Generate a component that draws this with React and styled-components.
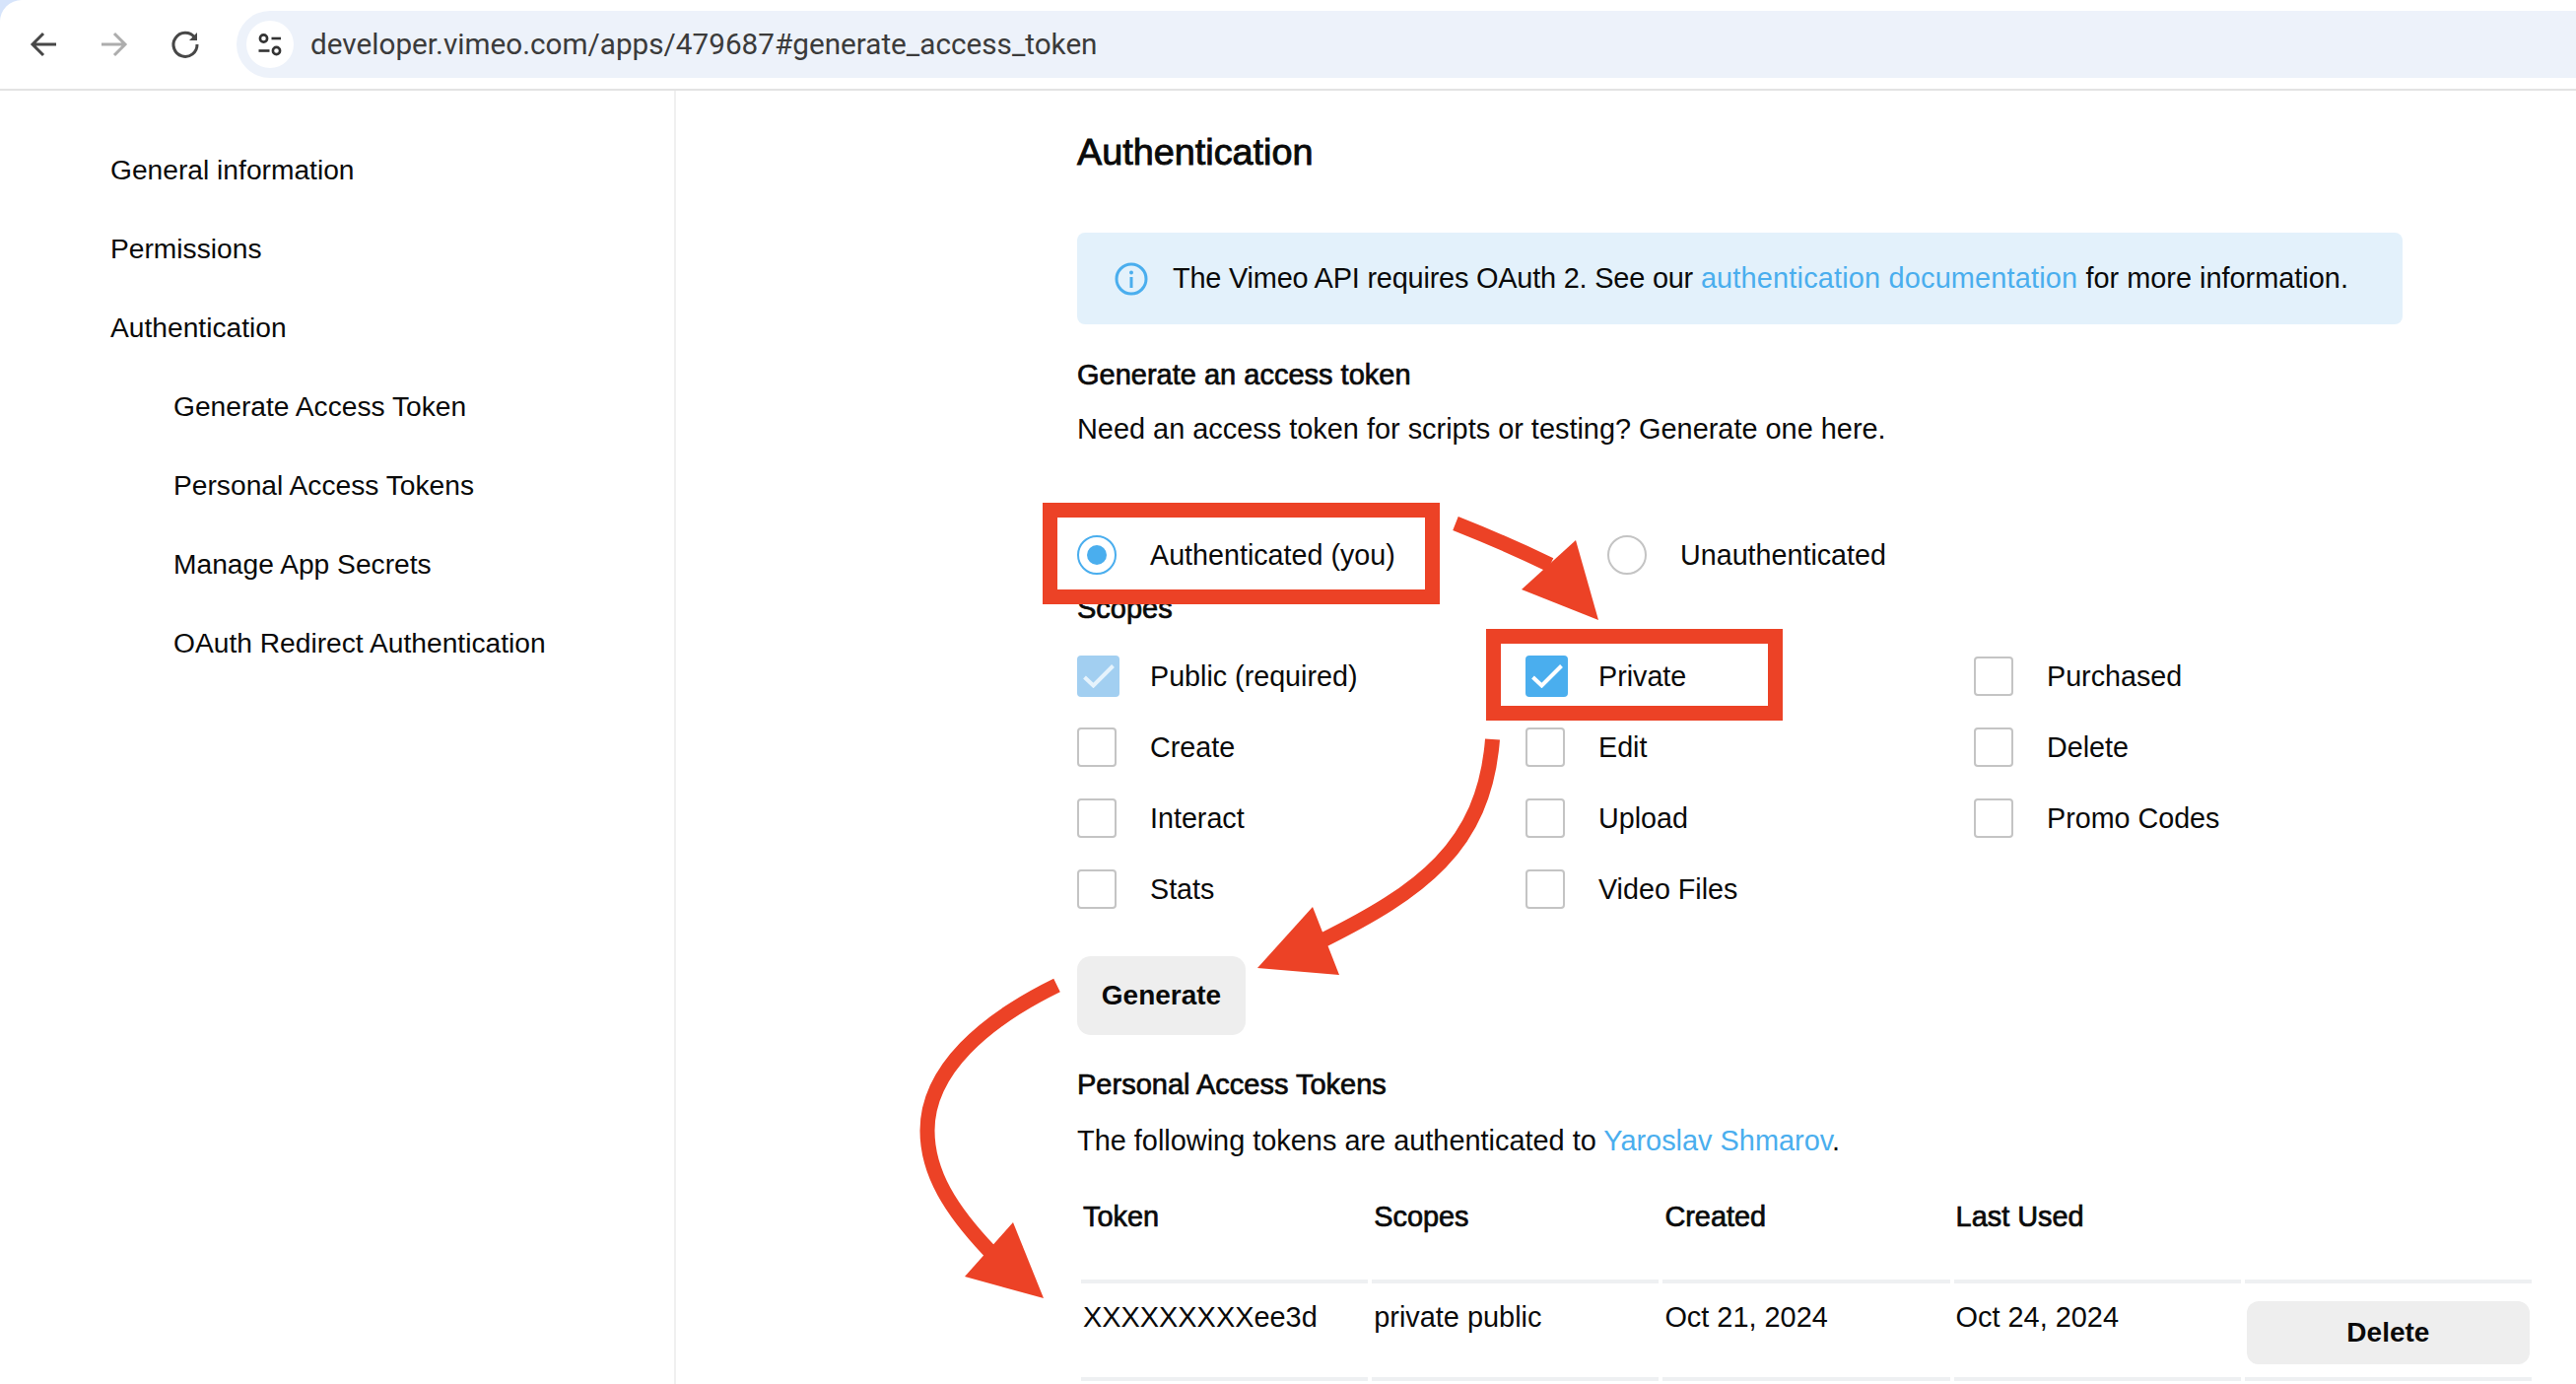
import React from 'react';
import styled, { createGlobalStyle } from 'styled-components';

const GlobalStyle = createGlobalStyle`
  html, body {
    margin: 0;
    padding: 0;
    background: #fff;
  }
  body {
    font-family: "Liberation Sans", Arial, sans-serif;
    color: #0a0a0a;
  }
`;

const Page = styled.div`
  position: relative;
  width: 2614px;
  height: 1404px;
  overflow: hidden;
  background: #fff;
`;

const Toolbar = styled.header`
  height: 90px;
  background: #d6e4fb;
  border-bottom: 2px solid #e3e3e3;
`;

const ToolbarInner = styled.div`
  display: flex;
  align-items: center;
  height: 100%;
  padding-left: 26px;
  background: #fff;
  border-top-left-radius: 22px;
`;

const NavIcon = styled.svg`
  width: 36px;
  height: 36px;
  margin-right: 36px;
  flex: none;
  fill: none;
  stroke: ${(p) => (p.$disabled ? '#adadad' : '#474747')};
  stroke-width: 3;
`;

const Omnibox = styled.div`
  flex: 1;
  display: flex;
  align-items: center;
  height: 68px;
  margin-left: -2px;
  padding-left: 10px;
  background: #edf2fa;
  border-radius: 34px 0 0 34px;
`;

const SiteInfo = styled.div`
  display: flex;
  align-items: center;
  justify-content: center;
  width: 48px;
  height: 48px;
  margin-right: 17px;
  border-radius: 50%;
  background: #fff;
`;

const Url = styled.span`
  padding-bottom: 2px;
  font-family: Roboto, sans-serif;
  font-size: 29.7px;
  color: #3b3b3b;
  white-space: nowrap;
`;

const Body = styled.div`
  display: flex;
  height: 1312px;
`;

const Sidebar = styled.nav`
  width: 684px;
  flex: none;
  padding-top: 40px;
  border-right: 2px solid #f0f0f0;
`;

const NavItem = styled.div`
  height: 80px;
  line-height: 80px;
  padding-left: ${(p) => (p.$sub ? 176 : 112)}px;
  font-size: 28.2px;
`;

const Main = styled.main`
  flex: 1;
  padding-left: 407px;
`;

const PageTitle = styled.h1`
  margin: 40px 0 0;
  font-size: 37.8px;
  line-height: 44px;
  font-weight: 400;
  -webkit-text-stroke: 0.9px #0a0a0a;
`;

const Banner = styled.div`
  display: flex;
  align-items: center;
  width: 1345px;
  height: 93px;
  margin-top: 60px;
  padding-left: 38px;
  box-sizing: border-box;
  background: #e3f1fb;
  border-radius: 8px;
  font-size: 28.9px;
`;

const InfoIcon = styled.svg`
  width: 34px;
  height: 34px;
  margin-right: 25px;
  flex: none;
`;

const BannerIntro = styled.span`
  letter-spacing: -0.2px;
`;

const Link = styled.a`
  color: #4aaeee;
  letter-spacing: ${(p) => p.$spacing || 0}px;
`;

const SectionTitle = styled.h2`
  margin: ${(p) => p.$top}px 0 0;
  font-size: 29px;
  line-height: 40px;
  font-weight: 400;
  -webkit-text-stroke: 0.7px #0a0a0a;
`;

const Paragraph = styled.p`
  margin: ${(p) => p.$top}px 0 0;
  font-size: 28.9px;
  line-height: 40px;
`;

const RadioRow = styled.div`
  display: grid;
  grid-template-columns: 538px auto;
  margin-top: 88px;
`;

const Option = styled.label`
  display: flex;
  align-items: center;
  gap: 34px;
  height: ${(p) => (p.$row ? 72 : 40)}px;
  font-size: 28.7px;
`;

const Radio = styled.span`
  display: flex;
  align-items: center;
  justify-content: center;
  width: 40px;
  height: 40px;
  box-sizing: border-box;
  border-radius: 50%;
  border: 2px solid ${(p) => (p.$checked ? '#4aaeee' : '#c4c4c4')};
  &::after {
    content: '';
    display: ${(p) => (p.$checked ? 'block' : 'none')};
    width: 20px;
    height: 20px;
    border-radius: 50%;
    background: #4aaeee;
  }
`;

const ScopeGrid = styled.div`
  display: grid;
  grid-template-columns: repeat(3, 455px);
  margin-top: 13px;
`;

const CheckBox = styled.span`
  display: flex;
  align-items: center;
  justify-content: center;
  width: ${(p) => (p.$checked ? 43 : 40)}px;
  height: ${(p) => (p.$checked ? 42 : 40)}px;
  margin-right: ${(p) => (p.$checked ? -3 : 0)}px;
  box-sizing: border-box;
  border-radius: 4px;
  border: 2px solid #c4c4c4;
  border-color: ${(p) => (p.$checked ? 'transparent' : '#c4c4c4')};
  background: ${(p) => (p.$checked ? (p.$disabled ? '#a2cff1' : '#4aaeee') : '#fff')};
`;

const Button = styled.button`
  display: block;
  width: ${(p) => p.$width || '171px'};
  height: ${(p) => p.$height || '80px'};
  margin-top: ${(p) => p.$top || 0}px;
  padding: 0;
  border: 0;
  border-radius: ${(p) => p.$radius || 14}px;
  background: #eee;
  color: #0a0a0a;
  font-family: "Liberation Sans", Arial, sans-serif;
  font-size: 28px;
  font-weight: 700;
`;

const TokenTable = styled.table`
  width: 1480px;
  margin-top: 37px;
  border-collapse: separate;
  border-spacing: 4px 0;
  table-layout: fixed;
  font-size: 28.9px;
`;

const HeadCell = styled.th`
  padding: 0 0 44px 2px;
  border-bottom: 4px solid #eef0f2;
  line-height: 40px;
  text-align: left;
  font-weight: 400;
  -webkit-text-stroke: 0.7px #0a0a0a;
`;

const Cell = styled.td`
  height: 81px;
  padding: 14px 0 0 2px;
  border-bottom: 4px solid #eef0f2;
  line-height: 40px;
  vertical-align: top;
`;

const ActionCell = styled.td`
  padding: 18px 2px 13px;
  border-bottom: 4px solid #eef0f2;
  vertical-align: top;
`;

const Annotations = styled.svg`
  position: absolute;
  left: 0;
  top: 0;
  pointer-events: none;
`;

const navItems = [
  ['General information'],
  ['Permissions'],
  ['Authentication'],
  ['Generate Access Token', true],
  ['Personal Access Tokens', true],
  ['Manage App Secrets', true],
  ['OAuth Redirect Authentication', true],
];

const scopes = [
  { label: 'Public (required)', checked: true, disabled: true },
  { label: 'Private', checked: true },
  { label: 'Purchased' },
  { label: 'Create' },
  { label: 'Edit' },
  { label: 'Delete' },
  { label: 'Interact' },
  { label: 'Upload' },
  { label: 'Promo Codes' },
  { label: 'Stats' },
  { label: 'Video Files' },
];

const Check = ({ faded }) => (
  <svg width="32" height="24" viewBox="0 0 32 24" fill="none">
    <path d="M1.5 13 L10.5 21.5 L30.5 1.5" stroke={faded ? '#e6f3fc' : '#fff'} strokeWidth="4" />
  </svg>
);

const RED = '#ec4226';

export default function App() {
  return (
    <Page>
      <GlobalStyle />
      <Toolbar>
        <ToolbarInner>
          <NavIcon viewBox="0 0 36 36">
            <path d="M31 18 H8 M18 7 L7 18 L18 29" />
          </NavIcon>
          <NavIcon viewBox="0 0 36 36" $disabled>
            <path d="M5 18 H28 M18 7 L29 18 L18 29" />
          </NavIcon>
          <NavIcon viewBox="0 0 36 36">
            <path d="M27.5 11 A 12 12 0 1 0 30 18" />
            <path d="M30 6 V14 H22 Z" fill="#474747" stroke="none" />
          </NavIcon>
          <Omnibox>
            <SiteInfo>
              <svg width="30" height="30" viewBox="0 0 30 30" fill="none" stroke="#333" strokeWidth="2.6">
                <circle cx="8.5" cy="9" r="3.6" />
                <path d="M16.5 9 H26" />
                <circle cx="21.5" cy="21.5" r="3.6" />
                <path d="M3.5 21.5 H14.5" />
              </svg>
            </SiteInfo>
            <Url>developer.vimeo.com/apps/479687#generate_access_token</Url>
          </Omnibox>
        </ToolbarInner>
      </Toolbar>

      <Body>
        <Sidebar>
          {navItems.map(([label, sub]) => (
            <NavItem key={label} $sub={sub}>{label}</NavItem>
          ))}
        </Sidebar>

        <Main>
          <PageTitle>Authentication</PageTitle>

          <Banner>
            <InfoIcon viewBox="0 0 34 34" fill="none">
              <circle cx="17" cy="17" r="15" stroke="#4aaeee" strokeWidth="3" />
              <circle cx="17" cy="10.5" r="2" fill="#4aaeee" />
              <rect x="15.5" y="15" width="3" height="11" fill="#4aaeee" />
            </InfoIcon>
            <span>
              <BannerIntro>The Vimeo API requires OAuth 2. See our </BannerIntro>
              <Link $spacing={0.18}>authentication documentation</Link> for more information.
            </span>
          </Banner>

          <SectionTitle $top={31}>Generate an access token</SectionTitle>
          <Paragraph $top={15}>Need an access token for scripts or testing? Generate one here.</Paragraph>

          <RadioRow>
            <Option><Radio $checked />Authenticated (you)</Option>
            <Option><Radio />Unauthenticated</Option>
          </RadioRow>

          <SectionTitle $top={14}>Scopes</SectionTitle>
          <ScopeGrid>
            {scopes.map((s) => (
              <Option key={s.label} $row>
                <CheckBox $checked={s.checked} $disabled={s.disabled}>
                  {s.checked && <Check faded={s.disabled} />}
                </CheckBox>
                {s.label}
              </Option>
            ))}
          </ScopeGrid>

          <Button $top={32}>Generate</Button>

          <SectionTitle $top={30}>Personal Access Tokens</SectionTitle>
          <Paragraph $top={17}>
            The following tokens are authenticated to <Link>Yaroslav Shmarov</Link>.
          </Paragraph>

          <TokenTable>
            <thead>
              <tr>
                <HeadCell>Token</HeadCell>
                <HeadCell>Scopes</HeadCell>
                <HeadCell>Created</HeadCell>
                <HeadCell>Last Used</HeadCell>
                <HeadCell />
              </tr>
            </thead>
            <tbody>
              <tr>
                <Cell>XXXXXXXXXee3d</Cell>
                <Cell>private public</Cell>
                <Cell>Oct 21, 2024</Cell>
                <Cell>Oct 24, 2024</Cell>
                <ActionCell>
                  <Button $width="100%" $height="64px" $radius={12}>Delete</Button>
                </ActionCell>
              </tr>
            </tbody>
          </TokenTable>
        </Main>
      </Body>

      <Annotations width="2614" height="1404" viewBox="0 0 2614 1404" fill="none">
        <rect x="1065.5" y="517.5" width="388" height="88" stroke={RED} strokeWidth="15" />
        <rect x="1515.5" y="645.5" width="286" height="78" stroke={RED} strokeWidth="15" />

        <path d="M1477 531 Q1530 552 1573 573" stroke={RED} strokeWidth="15" />
        <polygon points="1599,548 1622,629 1544,598" fill={RED} />

        <path d="M1514.5 750 C1506 860 1440 905 1342 954" stroke={RED} strokeWidth="15" />
        <polygon points="1332,920 1276,982 1359,989" fill={RED} />

        <path d="M1072.5 999.5 C1000 1035 941 1085 941 1147 C941 1190 965 1228 1005 1270" stroke={RED} strokeWidth="15" />
        <polygon points="1028,1240 1059,1317 979,1295" fill={RED} />
      </Annotations>
    </Page>
  );
}
